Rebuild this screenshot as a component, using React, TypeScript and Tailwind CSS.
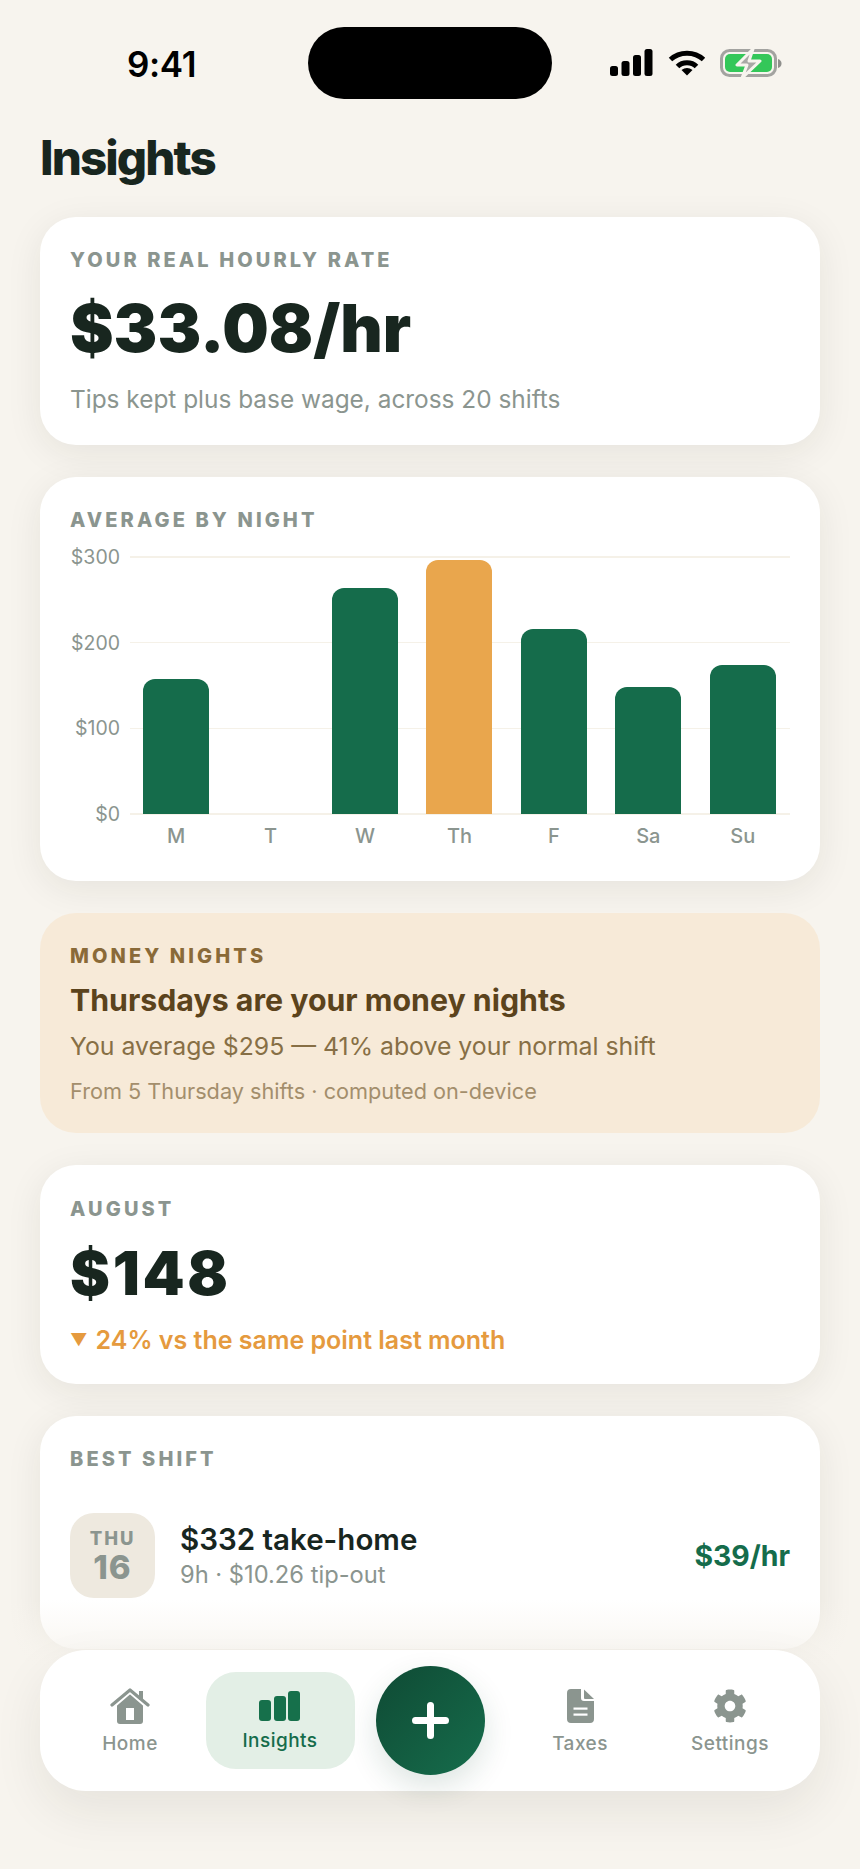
import React from "react";
import { FaCog } from "react-icons/fa";

const days = [
  { d: "M", h: 135 },
  { d: "T", h: 0 },
  { d: "W", h: 226 },
  { d: "Th", h: 254, hot: true },
  { d: "F", h: 185 },
  { d: "Sa", h: 127 },
  { d: "Su", h: 149 },
];

function Label({ children, className = "text-[#8b958f]" }: { children: React.ReactNode; className?: string }) {
  return <div className={`text-[20px] leading-[24px] font-extrabold tracking-[0.155em] ${className}`}>{children}</div>;
}

function Card({ children, className = "", bg = "bg-white shadow-[0_8px_36px_rgba(40,40,25,0.08)]" }: { children: React.ReactNode; className?: string; bg?: string }) {
  return <section className={`mx-10 rounded-[36px] px-[30px] ${bg} ${className}`}>{children}</section>;
}

function Signal() {
  return (
    <svg width="43" height="28" viewBox="0 0 43 28" fill="#000">
      <rect x="0" y="17" width="8" height="10" rx="2.5" />
      <rect x="11.5" y="12" width="8" height="15" rx="2.5" />
      <rect x="23" y="6" width="8" height="21" rx="2.5" />
      <rect x="34.5" y="0" width="8" height="27" rx="2.5" />
    </svg>
  );
}

function Wifi() {
  return (
    <svg width="38" height="28" viewBox="0 0 38 28" fill="none" stroke="#000" strokeWidth="5">
      <path d="M2.5 10.5C11.5 2 26.5 2 35.5 10.5" />
      <path d="M9.5 17.5C14.5 12.5 23.5 12.5 28.5 17.5" />
      <path d="M13.5 21L19 26.5L24.5 21C21 18.3 17 18.3 13.5 21Z" fill="#000" stroke="none" />
    </svg>
  );
}

function Battery() {
  return (
    <svg width="62" height="29" viewBox="0 0 62 29" fill="none">
      <rect x="1.5" y="1.5" width="54" height="25" rx="8" stroke="#a3a3a0" strokeWidth="3" />
      <path d="M58 10c2.5 1 3.5 2.5 3.500 4.500S60.500 18 58 19Z" fill="#8f8f8c" />
      <rect x="5" y="5" width="47" height="18" rx="5" fill="#34c759" />
      <path d="M33 0L17 16h10l-5 13 18-17h-11l4-12Z" fill="#a9a9a6" stroke="#f7f4ee" strokeWidth="3" strokeLinejoin="round" />
    </svg>
  );
}

function HomeIcon() {
  return (
    <svg width="40" height="36" viewBox="0 0 40 36" fill="#8b958f">
      <path d="M7 16L20 5l13 11v17a3 3 0 0 1-3 3H10a3 3 0 0 1-3-3Z" />
      <rect x="16" y="20" width="8" height="12" fill="#fff" />
      <path d="M2 18.500L20 3l18 15.500" fill="none" stroke="#fff" strokeWidth="5" />
      <path d="M2 17L20 2l18 15" fill="none" stroke="#8b958f" strokeWidth="3.200" strokeLinecap="round" strokeLinejoin="round" />
      <rect x="29" y="3" width="4" height="9" />
    </svg>
  );
}

function BarsIcon() {
  return (
    <svg width="42" height="30" viewBox="0 0 42 30" fill="#16704b">
      <rect x="0" y="9" width="12" height="21" rx="3" />
      <rect x="15" y="5" width="12" height="25" rx="3" />
      <rect x="29" y="0" width="12" height="30" rx="3" />
    </svg>
  );
}

function DocIcon() {
  return (
    <svg width="27" height="34" viewBox="0 0 27 34" fill="#8b958f">
      <path d="M4 0h10v9a3 3 0 0 0 3 3h10v18a4 4 0 0 1-4 4H4a4 4 0 0 1-4-4V4a4 4 0 0 1 4-4Z" />
      <path d="M17 0.500L27 10h-9a1 1 0 0 1-1-1Z" />
      <rect x="6.500" y="18.500" width="14" height="2.200" fill="#fff" />
      <rect x="6.500" y="24.500" width="14" height="2.200" fill="#fff" />
    </svg>
  );
}

function NavItem({ icon, label }: { icon: React.ReactNode; label: string }) {
  return (
    <div className="flex flex-col items-center pt-[2px]">
      <div className="flex h-[36px] items-center justify-center">{icon}</div>
      <div className="mt-[8px] text-[19px] leading-[24px] font-medium tracking-[0.025em] text-[#8b958f]">{label}</div>
    </div>
  );
}

export default function App() {
  return (
    <div className="relative h-[1869px] w-[860px] overflow-hidden bg-[#f7f4ee] font-['Inter',sans-serif] text-[#18261f]">
      <header className="relative flex h-[125px] items-start">
        <div className="ml-[127px] mt-[44px] text-[35px] leading-[40px] font-semibold tracking-[-0.01em] text-black">9:41</div>
        <div className="absolute left-[308px] top-[27px] h-[72px] w-[244px] rounded-full bg-black" />
        <div className="absolute left-[610px] top-[49px] flex items-start gap-[14.5px]">
          <Signal />
          <Wifi />
          <Battery />
        </div>
      </header>

      <h1 className="ml-10 text-[47.5px] leading-[66px] font-extrabold tracking-[-0.04em] text-[#18261f]">Insights</h1>

      <main className="mt-[26px] flex flex-col gap-[32px]">
        <Card className="h-[228px] pt-[31px]">
          <Label>YOUR REAL HOURLY RATE</Label>
          <div className="mt-[17px] text-[65.5px] leading-[80px] font-black">$33.08/hr</div>
          <div className="mt-[14px] text-[24.4px] leading-[32px] text-[#8b958f]">Tips kept plus base wage, across 20 shifts</div>
        </Card>

        <Card className="h-[404px] pt-[31px]">
          <Label>AVERAGE BY NIGHT</Label>
          <div className="relative mt-[25px] h-[257px]">
            {[300, 200, 100, 0].map((n, i) => (
              <div key={n} className="absolute right-0 left-0 flex items-center" style={{ top: `${i * 85.7 - 12}px` }}>
                <div className="w-[50px] text-right text-[19.5px] leading-[24px] text-[#8b958f]">${n}</div>
                <div className="ml-[10px] h-[1.500px] flex-1 bg-[#f5f1e8]" />
              </div>
            ))}
            <div className="absolute top-0 right-0 bottom-0 left-[59px] grid grid-cols-7 items-end">
              {days.map((x) => (
                <div key={x.d} className="flex h-full items-end justify-center">
                  {x.h > 0 && (
                    <div
                      className={`w-[66px] rounded-t-[12px] ${x.hot ? "bg-[#e9a64d]" : "bg-[#156c4b]"}`}
                      style={{ height: `${x.h}px` }}
                    />
                  )}
                </div>
              ))}
            </div>
          </div>
          <div className="mt-[8px] ml-[59px] grid grid-cols-7 text-center text-[20px] leading-[28px] font-medium text-[#8b958f]">
            {days.map((x) => (
              <div key={x.d}>{x.d}</div>
            ))}
          </div>
        </Card>

        <Card className="h-[220px] pt-[31px]" bg="bg-[#f7ead8]">
          <Label className="text-[#8a6a38]">MONEY NIGHTS</Label>
          <div className="mt-[12px] text-[30.3px] leading-[40px] font-bold text-[#5b431c]">Thursdays are your money nights</div>
          <div className="mt-[8px] text-[24.8px] leading-[36px] text-[#876f45]">You average $295 — 41% above your normal shift</div>
          <div className="mt-[12px] text-[21.7px] leading-[30px] text-[#a38e6c]">From 5 Thursday shifts · computed on-device</div>
        </Card>

        <Card className="h-[219px] pt-[32px]">
          <Label>AUGUST</Label>
          <div className="mt-[17px] text-[60px] leading-[70px] font-black tracking-[0.045em]">$148</div>
          <div className="mt-[15px] flex items-center text-[25px] leading-[34px] font-semibold text-[#e59a3e]">
            <span className="mr-[8px] text-[17px]">▼</span>
            <span>24% vs the same point last month</span>
          </div>
        </Card>

        <Card className="h-[233px] pt-[31px]">
          <Label>BEST SHIFT</Label>
          <div className="mt-[42px] flex items-center">
            <div className="flex h-[85px] w-[85px] flex-col items-center justify-center rounded-[24px] bg-[#eee9df] text-[#8b958f]">
              <div className="text-[18.5px] leading-[22px] font-extrabold tracking-[0.1em]">THU</div>
              <div className="text-[33px] leading-[36px] font-extrabold tracking-[0.03em]">16</div>
            </div>
            <div className="ml-[25px] flex-1">
              <div className="text-[29.5px] leading-[36px] font-semibold">$332 take-home</div>
              <div className="mt-[2px] text-[23.7px] leading-[32px] text-[#8b958f]">9h · $10.26 tip-out</div>
            </div>
            <div className="mt-[2px] text-[28.4px] font-bold text-[#156c4b]">$39/hr</div>
          </div>
        </Card>
      </main>

      <div className="absolute right-0 bottom-0 left-0 h-[269px] bg-[linear-gradient(to_bottom,rgba(247,244,238,0)_0%,#f7f4ee_25%)]" />

      <nav className="absolute top-[1650px] left-10 grid h-[141px] w-[780px] grid-cols-5 items-center justify-items-center rounded-[46px] bg-white px-[15px] shadow-[0_20px_50px_rgba(40,40,25,0.08)]">
        <NavItem icon={<HomeIcon />} label="Home" />
        <div className="flex h-[97px] w-[149px] flex-col items-center rounded-[30px] bg-[#e3efe6] pt-[19px]">
          <BarsIcon />
          <div className="mt-[8px] text-[19px] leading-[24px] font-medium tracking-[0.025em] text-[#156c4b]">Insights</div>
        </div>
        <div className="flex h-[109px] w-[109px] items-center justify-center rounded-full bg-[linear-gradient(135deg,#0f4a34,#166d4c)] shadow-[0_12px_30px_rgba(20,70,50,0.14)]">
          <svg width="37" height="37" viewBox="0 0 37 37" stroke="#fff" strokeWidth="7" strokeLinecap="round">
            <path d="M18.500 3.500V33.500M3.500 18.500H33.500" />
          </svg>
        </div>
        <NavItem icon={<DocIcon />} label="Taxes" />
        <NavItem icon={<FaCog size={34} color="#8b958f" />} label="Settings" />
      </nav>
    </div>
  );
}
